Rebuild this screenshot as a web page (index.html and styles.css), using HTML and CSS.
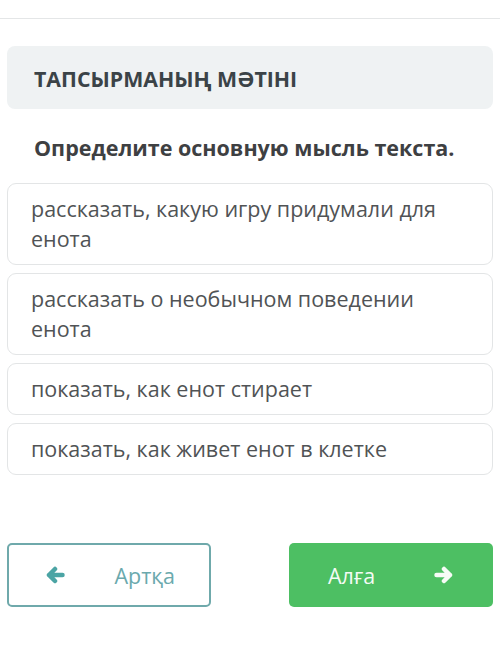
FILE: index.html
```html
<!DOCTYPE html>
<html lang="ru">
<head>
<meta charset="utf-8">
<link rel="stylesheet" href="styles.css">
</head>
<body>
<div class="topbar"></div>
<main class="page">
  <div class="task-head">ТАПСЫРМАНЫҢ МӘТІНІ</div>
  <div class="question">Определите основную мысль текста.</div>
  <ul class="options">
    <li class="option">рассказать, какую игру придумали для енота</li>
    <li class="option">рассказать о необычном поведении енота</li>
    <li class="option">показать, как енот стирает</li>
    <li class="option">показать, как живет енот в клетке</li>
  </ul>
  <div class="nav">
    <button class="btn btn-back">
      <svg class="arrow" viewBox="0 0 20 18"><path d="M17.5 9H4M10 3L4 9l6 6"/></svg>
      <span>Артқа</span>
    </button>
    <button class="btn btn-next">
      <span>Алға</span>
      <svg class="arrow" viewBox="0 0 20 18"><path d="M2.5 9H16M10 3l6 6-6 6"/></svg>
    </button>
  </div>
</main>
</body>
</html>
```
FILE: styles.css
```css
* { box-sizing: border-box; }
html, body { margin: 0; padding: 0; background: #fff; }
body { font-family: "Open Sans", "Noto Sans", sans-serif; }

.topbar {
  height: 19px;
  border-bottom: 1px solid #e4e6e7;
}

.page {
  padding: 0 7px;
}

.task-head {
  margin-top: 27px;
  height: 63px;
  background: #eff2f3;
  border-radius: 8px;
  padding-left: 27px;
  padding-top: 2px;
  display: flex;
  align-items: center;
  font-size: 21.3px;
  font-weight: 700;
  color: #3b4347;
}

.question {
  margin-top: 25px;
  padding-left: 27px;
  font-size: 21.5px;
  line-height: 28px;
  font-weight: 700;
  color: #3e4042;
}

.options {
  list-style: none;
  margin: 21px 0 0;
  padding: 0;
  display: flex;
  flex-direction: column;
  gap: 8px;
}

.option {
  border: 1px solid #e3e5e6;
  border-radius: 9px;
  padding: 10px 40px 10px 23px;
  font-size: 21.5px;
  line-height: 30px;
  color: #505355;
}

.nav {
  margin-top: 68px;
  display: flex;
  justify-content: space-between;
}

.btn {
  width: 204px;
  height: 64px;
  border-radius: 5px;
  display: flex;
  align-items: center;
  justify-content: space-between;
  font-family: "Open Sans", "Noto Sans", sans-serif;
  font-size: 21.5px;
}

.btn-back {
  background: #fff;
  border: 2px solid #6fa9ab;
  color: #6aa9ad;
  padding: 0 34px 0 36px;
}

.btn-back .arrow { stroke: #4ba4a4; }

.btn-next {
  background: #4dbf63;
  border: none;
  color: #f4fbf5;
  padding: 0 39px;
}

.btn-next .arrow { stroke: #f6fbf6; }

.arrow {
  width: 20px;
  height: 18px;
  fill: none;
  stroke-width: 4.5;
  stroke-linecap: round;
  stroke-linejoin: round;
}
```
